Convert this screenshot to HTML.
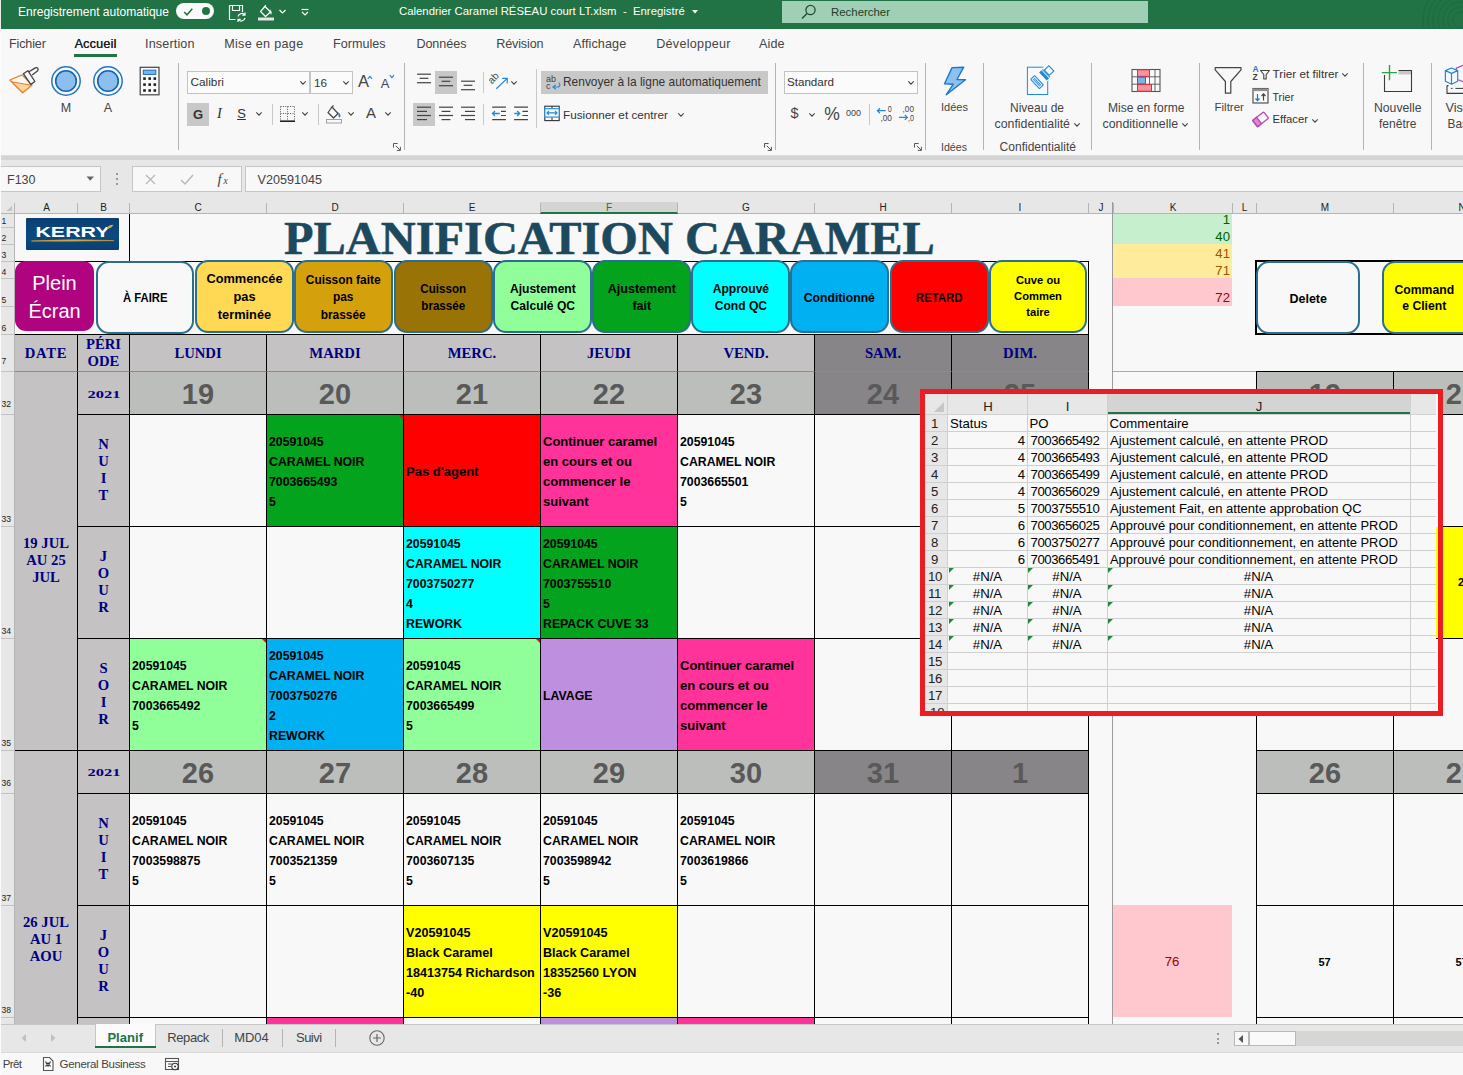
<!DOCTYPE html>
<html lang="fr"><head><meta charset="utf-8"><title>Calendrier Caramel RÉSEAU court LT.xlsm - Excel</title>
<style>
html,body{margin:0;padding:0;}
body{width:1463px;height:1075px;overflow:hidden;background:#f8f8f8;font-family:"Liberation Sans","DejaVu Sans",sans-serif;}
#app{position:relative;width:1463px;height:1075px;overflow:hidden;}
#app div,#app svg{position:absolute;box-sizing:border-box;}
.t{white-space:pre;}
.c{white-space:pre-line;display:flex;align-items:center;padding:2px 0 0 2px;font:bold 12.3px/20px "Liberation Sans","DejaVu Sans",sans-serif;color:#000;border-right:1px solid #000;border-bottom:1px solid #000;}
.btn{display:flex;align-items:center;justify-content:center;text-align:center;border:2px solid #2a6f8f;border-radius:13px;padding-top:1px;font:bold 12.8px/17.6px "Liberation Sans","DejaVu Sans",sans-serif;color:#000;white-space:pre-line;}
.hd{display:flex;align-items:center;justify-content:center;text-align:center;font:bold 14.67px/17px "Liberation Serif","DejaVu Serif",serif;color:#000080;white-space:pre-line;}
.dn{display:flex;align-items:center;justify-content:center;font:bold 29px/34px "Liberation Sans","DejaVu Sans",sans-serif;color:#595959;}
</style></head><body><div id="app">
<div style="left:0px;top:0px;width:1463px;height:29px;background:#217346;"></div>
<div style="left:0px;top:0px;width:1px;height:29px;background:#e8efe9;"></div>
<div class="t" style="left:18px;top:5.1px;font:normal normal 12.02px/14.42px 'Liberation Sans', 'DejaVu Sans', sans-serif;color:#fff;">Enregistrement automatique</div>
<div style="left:176px;top:3px;width:38px;height:16px;background:#fafafa;border-radius:8px;"></div>
<svg style="left:182.5px;top:6.5px;" width="11" height="10" viewBox="0 0 11 10"><path d="M1.2 5 L4 7.8 L9.3 1.8" fill="none" stroke="#217346" stroke-width="1.5"/></svg>
<div style="left:202px;top:7px;width:8.4px;height:8.4px;background:#217346;border-radius:5px;"></div>
<svg style="left:228px;top:4px;" width="19" height="19" viewBox="0 0 19 19"><path d="M1.5 1.5 H14.5 V8 M1.5 1.5 V15.5 H7.5 M4.5 1.5 V6.5 H11.5 V1.5" fill="none" stroke="#fff" stroke-width="1.2"/><path d="M10 12.5 a4 4 0 0 1 7 -1.5 M17 14 a4 4 0 0 1 -7 1.5 M17 8.5 V11.2 H14.3 M10 18 V15.3 H12.7" fill="none" stroke="#fff" stroke-width="1.2"/></svg>
<svg style="left:256px;top:2px;" width="20" height="20" viewBox="0 0 20 20"><path d="M9 4.5 L14.5 10 L9.5 14.5 L4.5 9.5 Z M7.5 6 L9.8 3.2" fill="none" stroke="#fff" stroke-width="1.2" stroke-linejoin="round"/><path d="M14.3 7.2 q2.2 3 1.2 5.3 q-1.8 0 -1.2 -5.3" fill="#fff"/><rect x="2" y="15.5" width="16" height="3" fill="#f0e2e2"/></svg>
<svg style="left:278px;top:8px;" width="9" height="7" viewBox="0 0 9 7"><path d="M1.5 2 L4.5 5 L7.5 2" fill="none" stroke="#fff" stroke-width="1.2"/></svg>
<svg style="left:299.5px;top:7px;" width="10" height="10" viewBox="0 0 10 10"><path d="M1.5 2.5 H8.5" stroke="#fff" stroke-width="1.2"/><path d="M2 5 L5 8 L8 5" fill="none" stroke="#fff" stroke-width="1.2"/></svg>
<div class="t" style="left:399px;top:5.0px;font:normal normal 11.37px/13.64px 'Liberation Sans', 'DejaVu Sans', sans-serif;color:#fff;">Calendrier Caramel RÉSEAU court LT.xlsm  -  Enregistré</div>
<svg style="left:691px;top:9px;" width="8" height="6" viewBox="0 0 8 6"><path d="M1 1 L4 4.4 L7 1 Z" fill="#fff"/></svg>
<div style="left:782px;top:1px;width:366px;height:22px;background:#9fd0b5;"></div>
<svg style="left:800px;top:3px;" width="18" height="18" viewBox="0 0 18 18"><circle cx="10.5" cy="7" r="4.6" fill="none" stroke="#1e4e32" stroke-width="1.3"/><path d="M7 10.5 L2 15.5" stroke="#1e4e32" stroke-width="1.4"/></svg>
<div class="t" style="left:831px;top:5.5px;font:normal normal 11.41px/13.69px 'Liberation Sans', 'DejaVu Sans', sans-serif;color:#1f3b2a;">Rechercher</div>
<svg style="left:1383px;top:0px;" width="80" height="29" viewBox="0 0 80 29"><g fill="none" stroke="#1e6a40" stroke-width="1.6" opacity="0.75"><circle cx="78" cy="20" r="8"/><circle cx="78" cy="20" r="13"/><circle cx="78" cy="20" r="18"/><circle cx="78" cy="20" r="23"/><circle cx="78" cy="20" r="28"/><circle cx="78" cy="20" r="33"/><circle cx="78" cy="20" r="38"/></g></svg>
<div style="left:0px;top:29px;width:1463px;height:29px;background:#f8f8f8;"></div>
<div class="t" style="left:9px;top:37.4px;font:normal normal 12.6px/15.12px 'Liberation Sans', 'DejaVu Sans', sans-serif;color:#444;letter-spacing:-0.158px;">Fichier</div>
<div class="t" style="left:145px;top:37.4px;font:normal normal 12.6px/15.12px 'Liberation Sans', 'DejaVu Sans', sans-serif;color:#444;letter-spacing:0.153px;">Insertion</div>
<div class="t" style="left:224.2px;top:37.4px;font:normal normal 12.6px/15.12px 'Liberation Sans', 'DejaVu Sans', sans-serif;color:#444;letter-spacing:0.304px;">Mise en page</div>
<div class="t" style="left:333px;top:37.4px;font:normal normal 12.6px/15.12px 'Liberation Sans', 'DejaVu Sans', sans-serif;color:#444;letter-spacing:-0.001px;">Formules</div>
<div class="t" style="left:416.4px;top:37.4px;font:normal normal 12.6px/15.12px 'Liberation Sans', 'DejaVu Sans', sans-serif;color:#444;letter-spacing:-0.062px;">Données</div>
<div class="t" style="left:496.2px;top:37.4px;font:normal normal 12.6px/15.12px 'Liberation Sans', 'DejaVu Sans', sans-serif;color:#444;letter-spacing:-0.128px;">Révision</div>
<div class="t" style="left:573px;top:37.4px;font:normal normal 12.6px/15.12px 'Liberation Sans', 'DejaVu Sans', sans-serif;color:#444;letter-spacing:0.121px;">Affichage</div>
<div class="t" style="left:656.2px;top:37.4px;font:normal normal 12.6px/15.12px 'Liberation Sans', 'DejaVu Sans', sans-serif;color:#444;letter-spacing:0.287px;">Développeur</div>
<div class="t" style="left:759px;top:37.4px;font:normal normal 12.6px/15.12px 'Liberation Sans', 'DejaVu Sans', sans-serif;color:#444;letter-spacing:0.120px;">Aide</div>
<div class="t" style="left:74.4px;top:37.4px;font:normal normal 12.6px/15.12px 'Liberation Sans', 'DejaVu Sans', sans-serif;color:#222;text-shadow:0.25px 0 0 #222;letter-spacing:0.212px;">Accueil</div>
<div style="left:74px;top:54px;width:43px;height:3px;background:#217346;"></div>
<div style="left:0px;top:58px;width:1463px;height:97px;background:#f8f8f8;"></div>
<div style="left:0px;top:155px;width:1463px;height:5px;background:#d4d4d4;"></div>
<div style="left:0px;top:155px;width:1463px;height:1px;background:#dedede;"></div>
<div style="left:178px;top:63px;width:1px;height:87px;background:#b4b4b4;"></div>
<div style="left:404px;top:63px;width:1px;height:87px;background:#b4b4b4;"></div>
<div style="left:775px;top:63px;width:1px;height:87px;background:#b4b4b4;"></div>
<div style="left:925px;top:63px;width:1px;height:87px;background:#b4b4b4;"></div>
<div style="left:983px;top:63px;width:1px;height:87px;background:#b4b4b4;"></div>
<div style="left:1091px;top:63px;width:1px;height:87px;background:#b4b4b4;"></div>
<div style="left:1199px;top:63px;width:1px;height:87px;background:#b4b4b4;"></div>
<div style="left:1363px;top:63px;width:1px;height:87px;background:#b4b4b4;"></div>
<div style="left:1431px;top:63px;width:1px;height:87px;background:#b4b4b4;"></div>
<svg style="left:8px;top:64px;" width="34" height="34" viewBox="0 0 34 34"><path d="M1.9 16 L14.1 10.9 L24 21 L14.7 28.8 Z" fill="#f8f8f8" stroke="#e8822a" stroke-width="1.3" stroke-linejoin="round"/><path d="M3.6 17.7 L23.4 21.3 L14.7 28.6 Z" fill="#fbd59a" stroke="#e8822a" stroke-width="1.1" stroke-linejoin="round"/><path d="M20.6 8 L27.3 3.9 q1.7 -0.8 2.6 0.6 q0.8 1.5 -0.5 2.5 L24.2 11" fill="#f8f8f8" stroke="#444" stroke-width="1.3" stroke-linejoin="round"/><path d="M15.3 9.7 L19.9 6.7 L26.9 17.5 L22.8 20.4 Z" fill="#f8f8f8" stroke="#444" stroke-width="1.3" stroke-linejoin="round"/></svg>
<svg style="left:50px;top:65px;" width="32" height="32" viewBox="0 0 32 32"><circle cx="16" cy="16" r="14.2" fill="#f8f8f8" stroke="#1e78c8" stroke-width="1.5"/><circle cx="16" cy="16" r="10.3" fill="#8cbfee" stroke="#1464b4" stroke-width="1.6"/></svg>
<div class="t" style="left:-234px;width:600px;text-align:center;top:100.8px;font:normal normal 12.5px/15.0px 'Liberation Sans', 'DejaVu Sans', sans-serif;color:#444;">M</div>
<svg style="left:92px;top:65px;" width="32" height="32" viewBox="0 0 32 32"><circle cx="16" cy="16" r="14.2" fill="#f8f8f8" stroke="#1e78c8" stroke-width="1.5"/><circle cx="16" cy="16" r="10.3" fill="#8cbfee" stroke="#1464b4" stroke-width="1.6"/></svg>
<div class="t" style="left:-192px;width:600px;text-align:center;top:100.8px;font:normal normal 12.5px/15.0px 'Liberation Sans', 'DejaVu Sans', sans-serif;color:#444;">A</div>
<svg style="left:139px;top:66px;" width="22" height="30" viewBox="0 0 22 30"><rect x="1.2" y="1.3" width="18.8" height="27.5" fill="#fafafa" stroke="#444" stroke-width="1.2"/><rect x="4.3" y="4.2" width="12.5" height="4.2" fill="#7ab5ea" stroke="#1e6cc0" stroke-width="1"/><rect x="4.2" y="11.299999999999999" width="2.6" height="2.6" fill="#222"/><rect x="4.2" y="17.3" width="2.6" height="2.6" fill="#222"/><rect x="4.2" y="23.2" width="2.6" height="2.6" fill="#222"/><rect x="9.399999999999999" y="11.299999999999999" width="2.6" height="2.6" fill="#222"/><rect x="9.399999999999999" y="17.3" width="2.6" height="2.6" fill="#222"/><rect x="9.399999999999999" y="23.2" width="2.6" height="2.6" fill="#222"/><rect x="14.5" y="11.299999999999999" width="2.6" height="2.6" fill="#222"/><rect x="14.5" y="17.3" width="2.6" height="2.6" fill="#222"/><rect x="14.5" y="23.2" width="2.6" height="2.6" fill="#222"/></svg>
<div style="left:187px;top:71px;width:123px;height:23px;background:#fbfbfb;border:1px solid #c3c3c3;"></div>
<div style="left:310px;top:71px;width:43px;height:23px;background:#fbfbfb;border:1px solid #c3c3c3;border-left:1px solid #c3c3c3;"></div>
<div class="t" style="left:190.5px;top:75.4px;font:normal normal 11.82px/14.18px 'Liberation Sans', 'DejaVu Sans', sans-serif;color:#333;">Calibri</div>
<div class="t" style="left:314px;top:75.5px;font:normal normal 11.69px/14.03px 'Liberation Sans', 'DejaVu Sans', sans-serif;color:#333;">16</div>
<svg style="left:299px;top:80px;" width="8" height="6" viewBox="0 0 8 6"><path d="M1.3 1.4 L4 4.1 L6.7 1.4" fill="none" stroke="#444" stroke-width="1.1"/></svg>
<svg style="left:342px;top:80px;" width="8" height="6" viewBox="0 0 8 6"><path d="M1.3 1.4 L4 4.1 L6.7 1.4" fill="none" stroke="#444" stroke-width="1.1"/></svg>
<div class="t" style="left:63.5px;width:600px;text-align:center;top:72.1px;font:normal normal 16.5px/19.8px 'Liberation Sans', 'DejaVu Sans', sans-serif;color:#444;">A</div>
<svg style="left:367px;top:74.5px;" width="6" height="5" viewBox="0 0 6 5"><path d="M0.8 3.8 L2.9 1.4 L5 3.8" fill="none" stroke="#2a7bd0" stroke-width="1.1"/></svg>
<div class="t" style="left:85px;width:600px;text-align:center;top:75.7px;font:normal normal 13px/15.6px 'Liberation Sans', 'DejaVu Sans', sans-serif;color:#444;">A</div>
<svg style="left:388.5px;top:74px;" width="6" height="5" viewBox="0 0 6 5"><path d="M0.8 1.2 L2.9 3.6 L5 1.2" fill="none" stroke="#2a7bd0" stroke-width="1.1"/></svg>
<div style="left:187px;top:103px;width:22px;height:23px;background:#c8c8c8;"></div>
<div class="t" style="left:-102px;width:600px;text-align:center;top:106.7px;font:normal bold 13px/15.6px 'Liberation Sans', 'DejaVu Sans', sans-serif;color:#333;">G</div>
<div class="t" style="left:-80.5px;width:600px;text-align:center;top:105.3px;font:italic normal 14.5px/17.4px 'Liberation Serif', 'DejaVu Serif', serif;color:#333;">I</div>
<div class="t" style="left:-58.5px;width:600px;text-align:center;top:105.7px;font:normal normal 13px/15.6px 'Liberation Sans', 'DejaVu Sans', sans-serif;color:#333;text-decoration:underline;">S</div>
<svg style="left:255px;top:111px;" width="8" height="6" viewBox="0 0 8 6"><path d="M1.3 1.4 L4 4.1 L6.7 1.4" fill="none" stroke="#444" stroke-width="1.1"/></svg>
<div style="left:272px;top:104px;width:1px;height:21px;background:#c8c8c8;"></div>
<svg style="left:279px;top:105px;" width="17" height="18" viewBox="0 0 17 18"><path d="M1.5 1.5 H15.5 M1.5 1.5 V15 M15.5 1.5 V15 M8.5 1.5 V15 M1.5 8.5 H15.5" fill="none" stroke="#555" stroke-width="1" stroke-dasharray="1 1.4"/><path d="M1 16.2 H16" stroke="#222" stroke-width="1.6"/></svg>
<svg style="left:301px;top:111px;" width="8" height="6" viewBox="0 0 8 6"><path d="M1.3 1.4 L4 4.1 L6.7 1.4" fill="none" stroke="#444" stroke-width="1.1"/></svg>
<div style="left:318px;top:104px;width:1px;height:21px;background:#c8c8c8;"></div>
<svg style="left:325px;top:104px;" width="19" height="20" viewBox="0 0 19 20"><path d="M7 3 L13 9.5 L8.5 14 L3 8.5 Z M6 4 L8.5 1.5" fill="none" stroke="#444" stroke-width="1.2" stroke-linejoin="round"/><path d="M13.5 8 q3 3.5 1.4 5.4 q-2 .5 -1.4 -5.4" fill="#2a7bd0"/><rect x="1.5" y="15.5" width="15" height="3.5" fill="#f8f8f8" stroke="#999" stroke-width="0.9"/></svg>
<svg style="left:347px;top:111px;" width="8" height="6" viewBox="0 0 8 6"><path d="M1.3 1.4 L4 4.1 L6.7 1.4" fill="none" stroke="#444" stroke-width="1.1"/></svg>
<div class="t" style="left:71px;width:600px;text-align:center;top:103.5px;font:normal normal 15px/18.0px 'Liberation Sans', 'DejaVu Sans', sans-serif;color:#444;">A</div>
<svg style="left:384px;top:111px;" width="8" height="6" viewBox="0 0 8 6"><path d="M1.3 1.4 L4 4.1 L6.7 1.4" fill="none" stroke="#444" stroke-width="1.1"/></svg>
<svg style="left:393px;top:143px;" width="9" height="9" viewBox="0 0 9 9"><path d="M0.5 4.6 V0.5 H4.6 M2.8 2.8 L7.2 7.2 M3.8 7.4 H7.4 V3.8" fill="none" stroke="#555" stroke-width="1"/></svg>
<svg style="left:764px;top:143px;" width="9" height="9" viewBox="0 0 9 9"><path d="M0.5 4.6 V0.5 H4.6 M2.8 2.8 L7.2 7.2 M3.8 7.4 H7.4 V3.8" fill="none" stroke="#555" stroke-width="1"/></svg>
<svg style="left:914px;top:143px;" width="9" height="9" viewBox="0 0 9 9"><path d="M0.5 4.6 V0.5 H4.6 M2.8 2.8 L7.2 7.2 M3.8 7.4 H7.4 V3.8" fill="none" stroke="#555" stroke-width="1"/></svg>
<div style="left:435px;top:71px;width:22px;height:23px;background:#c8c8c8;"></div>
<div style="left:413px;top:103px;width:22px;height:23px;background:#c8c8c8;"></div>
<svg style="left:415px;top:73px;" width="18" height="18" viewBox="0 0 18 18"><rect x="2" y="0.6" width="14" height="1.2" fill="#444"/><rect x="4.6" y="4.7" width="8.8" height="1.2" fill="#444"/><rect x="2" y="9.1" width="14" height="1.2" fill="#444"/></svg>
<svg style="left:437px;top:73px;" width="18" height="18" viewBox="0 0 18 18"><rect x="2" y="3.6" width="14" height="1.2" fill="#444"/><rect x="4.6" y="7.7" width="8.8" height="1.2" fill="#444"/><rect x="2" y="12.1" width="14" height="1.2" fill="#444"/></svg>
<svg style="left:459px;top:73px;" width="18" height="18" viewBox="0 0 18 18"><rect x="2" y="7.6" width="14" height="1.2" fill="#444"/><rect x="4.6" y="11.7" width="8.8" height="1.2" fill="#444"/><rect x="2" y="16.1" width="14" height="1.2" fill="#444"/></svg>
<svg style="left:415px;top:105px;" width="18" height="18" viewBox="0 0 18 18"><rect x="2" y="1.6" width="14" height="1.2" fill="#444"/><rect x="2" y="5.8" width="10" height="1.2" fill="#444"/><rect x="2" y="9.9" width="14" height="1.2" fill="#444"/><rect x="2" y="14" width="10" height="1.2" fill="#444"/></svg>
<svg style="left:437px;top:105px;" width="18" height="18" viewBox="0 0 18 18"><rect x="2" y="1.6" width="14" height="1.2" fill="#444"/><rect x="4.6" y="5.8" width="8.8" height="1.2" fill="#444"/><rect x="2" y="9.9" width="14" height="1.2" fill="#444"/><rect x="4.6" y="14" width="8.8" height="1.2" fill="#444"/></svg>
<svg style="left:459px;top:105px;" width="18" height="18" viewBox="0 0 18 18"><rect x="2" y="1.6" width="14" height="1.2" fill="#444"/><rect x="6" y="5.8" width="10" height="1.2" fill="#444"/><rect x="2" y="9.9" width="14" height="1.2" fill="#444"/><rect x="6" y="14" width="10" height="1.2" fill="#444"/></svg>
<div style="left:483px;top:72px;width:1px;height:21px;background:#c8c8c8;"></div>
<div style="left:483px;top:104px;width:1px;height:21px;background:#c8c8c8;"></div>
<svg style="left:489px;top:72px;" width="20" height="20" viewBox="0 0 20 20"><text x="3" y="12.5" font-size="10" font-family="Liberation Sans, sans-serif" fill="#444" transform="rotate(-48 3 12.5)">ab</text><path d="M7.3 16.7 L18 6.6 M13.2 6.4 L18.2 6.4 L18.2 11.4" fill="none" stroke="#1e8ad8" stroke-width="1.2"/></svg>
<svg style="left:510px;top:80px;" width="8" height="6" viewBox="0 0 8 6"><path d="M1.3 1.4 L4 4.1 L6.7 1.4" fill="none" stroke="#444" stroke-width="1.1"/></svg>
<svg style="left:490px;top:105px;" width="18" height="18" viewBox="0 0 18 18"><path d="M2.2 2.2 H15.9 M11 6.4 H15.9 M11 10.5 H15.9 M2.2 14.6 H15.9" stroke="#444" stroke-width="1.2"/><path d="M9.8 8.5 H2.6 M5 6 L2.5 8.5 L5 11" fill="none" stroke="#1e8ad8" stroke-width="1.3"/></svg>
<svg style="left:512px;top:105px;" width="18" height="18" viewBox="0 0 18 18"><path d="M2.1 2.2 H16 M10.4 6.4 H16 M10.4 10.5 H16 M2.1 14.6 H16" stroke="#444" stroke-width="1.2"/><path d="M2.3 8.5 H7.6 M5.2 6 L7.7 8.5 L5.2 11" fill="none" stroke="#1e8ad8" stroke-width="1.3"/></svg>
<div style="left:536px;top:69px;width:1px;height:59px;background:#c8c8c8;"></div>
<div style="left:541px;top:71px;width:227px;height:23px;background:#c8c8c8;"></div>
<svg style="left:545px;top:73px;" width="18" height="19" viewBox="0 0 18 19"><text x="1" y="8.8" font-size="9" font-family="Liberation Sans, sans-serif" fill="#444">ab</text><text x="1" y="15.8" font-size="9" font-family="Liberation Sans, sans-serif" fill="#444">c</text><path d="M13.6 9.6 q2.8 2.4 -0.2 4.4 H8.2 M10.8 11.6 L8 14 L10.8 16.4" fill="none" stroke="#1e8ad8" stroke-width="1.2"/></svg>
<div class="t" style="left:563px;top:75.3px;font:normal normal 11.95px/14.34px 'Liberation Sans', 'DejaVu Sans', sans-serif;color:#333;">Renvoyer à la ligne automatiquement</div>
<svg style="left:544px;top:105px;" width="17" height="17" viewBox="0 0 17 17"><rect x="0.8" y="1.2" width="14.4" height="14.4" fill="#f8f8f8" stroke="#333" stroke-width="1.1"/><path d="M8 1.2 V3.6 M8 12.2 V15.6" stroke="#333" stroke-width="1"/><rect x="0.8" y="3.7" width="14.4" height="8.4" fill="#f8f8f8" stroke="#1e8ad8" stroke-width="1.1"/><path d="M3 7.9 H13 M5 5.9 L3 7.9 L5 9.9 M11 5.9 L13 7.9 L11 9.9" fill="none" stroke="#1e8ad8" stroke-width="1.1"/></svg>
<div class="t" style="left:563px;top:107.5px;font:normal normal 11.73px/14.08px 'Liberation Sans', 'DejaVu Sans', sans-serif;color:#333;">Fusionner et centrer</div>
<svg style="left:677px;top:112px;" width="8" height="6" viewBox="0 0 8 6"><path d="M1.3 1.4 L4 4.1 L6.7 1.4" fill="none" stroke="#444" stroke-width="1.1"/></svg>
<div style="left:784px;top:71px;width:134px;height:23px;background:#fbfbfb;border:1px solid #c3c3c3;"></div>
<div class="t" style="left:787px;top:75.5px;font:normal normal 11.58px/13.9px 'Liberation Sans', 'DejaVu Sans', sans-serif;color:#333;">Standard</div>
<svg style="left:907px;top:80px;" width="8" height="6" viewBox="0 0 8 6"><path d="M1.3 1.4 L4 4.1 L6.7 1.4" fill="none" stroke="#444" stroke-width="1.1"/></svg>
<div class="t" style="left:494.5px;width:600px;text-align:center;top:105.3px;font:normal normal 14.5px/17.4px 'Liberation Sans', 'DejaVu Sans', sans-serif;color:#444;">$</div>
<svg style="left:808px;top:112px;" width="8" height="6" viewBox="0 0 8 6"><path d="M1.3 1.4 L4 4.1 L6.7 1.4" fill="none" stroke="#444" stroke-width="1.1"/></svg>
<div class="t" style="left:532px;width:600px;text-align:center;top:103.5px;font:normal normal 17.5px/21.0px 'Liberation Sans', 'DejaVu Sans', sans-serif;color:#444;">%</div>
<div class="t" style="left:553.5px;width:600px;text-align:center;top:107.6px;font:normal normal 9px/10.8px 'Liberation Sans', 'DejaVu Sans', sans-serif;color:#444;">000</div>
<div style="left:869px;top:104px;width:1px;height:21px;background:#c8c8c8;"></div>
<svg style="left:876px;top:105px;" width="18" height="18" viewBox="0 0 18 18"><text x="11.8" y="6.8" font-size="9.5" font-family="Liberation Sans, sans-serif" fill="#444" lengthAdjust="spacingAndGlyphs" textLength="4">0</text><text x="4.4" y="15.8" font-size="9.5" font-family="Liberation Sans, sans-serif" fill="#444" lengthAdjust="spacingAndGlyphs" textLength="11.6">,00</text><path d="M9.7 5.7 H1.5 M4 3.2 L1.4 5.7 L4 8.2" fill="none" stroke="#1e8ad8" stroke-width="1.2"/></svg>
<svg style="left:898px;top:105px;" width="18" height="18" viewBox="0 0 18 18"><text x="4.6" y="6.8" font-size="9.5" font-family="Liberation Sans, sans-serif" fill="#444" lengthAdjust="spacingAndGlyphs" textLength="11.4">,00</text><text x="10" y="15.8" font-size="9.5" font-family="Liberation Sans, sans-serif" fill="#444" lengthAdjust="spacingAndGlyphs" textLength="6">,0</text><path d="M1 12.4 H9.2 M6.8 9.9 L9.4 12.4 L6.8 14.9" fill="none" stroke="#1e8ad8" stroke-width="1.2"/></svg>
<svg style="left:943px;top:65px;" width="24" height="33" viewBox="0 0 24 33"><path d="M9.1 2.6 L20.7 2.2 L14 14.5 L22.5 14.8 L3.3 29.7 L10.3 19.2 L1.5 18.8 Z" fill="#8cc0f0" stroke="#1e78c8" stroke-width="1.4" stroke-linejoin="round"/></svg>
<div class="t" style="left:941px;top:101.4px;font:normal normal 11.04px/13.25px 'Liberation Sans', 'DejaVu Sans', sans-serif;color:#444;">Idées</div>
<div class="t" style="left:941px;top:140.6px;font:normal normal 10.63px/12.76px 'Liberation Sans', 'DejaVu Sans', sans-serif;color:#444;">Idées</div>
<svg style="left:1024px;top:63px;" width="34" height="36" viewBox="0 0 34 36"><rect x="3.4" y="4.2" width="20.3" height="27.3" fill="#f8f8f8" stroke="#1e8ad8" stroke-width="1"/><g transform="translate(13 19.1) rotate(-43.6)"><rect x="3" y="-6.4" width="19" height="12.8" fill="#f8f8f8"/><rect x="-2.7" y="-6.4" width="5.4" height="12.8" rx="0.8" fill="#f8f8f8" stroke="#1e8ad8" stroke-width="1.1"/><rect x="-0.9" y="-4.6" width="1.8" height="9.2" fill="#8cc0f0" stroke="#1e8ad8" stroke-width="0.8"/><rect x="8.2" y="-5.5" width="3.1" height="11" fill="#1e8ad8"/><rect x="12.2" y="-5.5" width="0.9" height="11" fill="#1e8ad8"/><rect x="13.6" y="-3.6" width="6.2" height="7.2" fill="#f8f8f8" stroke="#1e8ad8" stroke-width="1.1"/></g></svg>
<div class="t" style="left:1010px;top:100.8px;font:normal normal 11.99px/14.39px 'Liberation Sans', 'DejaVu Sans', sans-serif;color:#444;">Niveau de</div>
<div class="t" style="left:994.5px;top:116.6px;font:normal normal 12.35px/14.82px 'Liberation Sans', 'DejaVu Sans', sans-serif;color:#444;">confidentialité</div>
<svg style="left:1073px;top:122px;" width="8" height="6" viewBox="0 0 8 6"><path d="M1.3 1.4 L4 4.1 L6.7 1.4" fill="none" stroke="#444" stroke-width="1.1"/></svg>
<div class="t" style="left:999.5px;top:139.8px;font:normal normal 12.07px/14.48px 'Liberation Sans', 'DejaVu Sans', sans-serif;color:#444;">Confidentialité</div>
<svg style="left:1131px;top:68px;" width="31" height="26" viewBox="0 0 31 26"><rect x="1" y="1.5" width="28" height="22" fill="#fafafa" stroke="#555" stroke-width="1.1"/><path d="M1 8.8 H29 M1 16.2 H29 M6.5 1.5 V23.5 M18.5 1.5 V23.5 M24 1.5 V23.5" stroke="#555" stroke-width="0.9"/><rect x="6.5" y="1.8" width="12" height="6.6" fill="#f7929e" stroke="#d8323c" stroke-width="1"/><rect x="6.5" y="9.2" width="8" height="6.6" fill="#7ab5ea" stroke="#1e78c8" stroke-width="1"/><rect x="6.5" y="16.6" width="14" height="6.6" fill="#f7929e" stroke="#d8323c" stroke-width="1"/></svg>
<div class="t" style="left:1108px;top:100.8px;font:normal normal 12.07px/14.48px 'Liberation Sans', 'DejaVu Sans', sans-serif;color:#444;">Mise en forme</div>
<div class="t" style="left:1102.5px;top:116.6px;font:normal normal 12.35px/14.82px 'Liberation Sans', 'DejaVu Sans', sans-serif;color:#444;">conditionnelle</div>
<svg style="left:1180.5px;top:122px;" width="8" height="6" viewBox="0 0 8 6"><path d="M1.3 1.4 L4 4.1 L6.7 1.4" fill="none" stroke="#444" stroke-width="1.1"/></svg>
<svg style="left:1212px;top:65px;" width="34" height="32" viewBox="0 0 34 32"><path d="M3.2 2.6 H29 V4.8 L18.8 16.5 V28.2 H13.4 V16.5 L3.2 4.8 Z" fill="#f8f8f8" stroke="#444" stroke-width="1.2" stroke-linejoin="round"/></svg>
<div class="t" style="left:1214.5px;top:101.1px;font:normal normal 11.54px/13.85px 'Liberation Sans', 'DejaVu Sans', sans-serif;color:#444;">Filtrer</div>
<svg style="left:1252px;top:64px;" width="19" height="19" viewBox="0 0 19 19"><text x="0.5" y="8" font-size="8.5" font-weight="bold" font-family="Liberation Sans, sans-serif" fill="#1e78c8">A</text><text x="0.5" y="16.3" font-size="8.5" font-weight="bold" font-family="Liberation Sans, sans-serif" fill="#444">Z</text><path d="M8.5 6.5 H17.5 L14.2 10.5 V15 H11.8 V10.5 Z" fill="#f6f6f6" stroke="#444" stroke-width="1.1" stroke-linejoin="round"/></svg>
<div class="t" style="left:1272.5px;top:67.0px;font:normal normal 11.72px/14.06px 'Liberation Sans', 'DejaVu Sans', sans-serif;color:#333;">Trier et filtrer</div>
<svg style="left:1341px;top:71.5px;" width="8" height="6" viewBox="0 0 8 6"><path d="M1.3 1.4 L4 4.1 L6.7 1.4" fill="none" stroke="#444" stroke-width="1.1"/></svg>
<svg style="left:1252px;top:87px;" width="18" height="18" viewBox="0 0 18 18"><rect x="1" y="1.5" width="15" height="14.5" fill="#fafafa" stroke="#444" stroke-width="1.1"/><rect x="1" y="1.5" width="15" height="2.6" fill="#909090"/><path d="M5.5 7 V13.5 M3.5 11.5 L5.5 13.7 L7.5 11.5" fill="none" stroke="#1e78c8" stroke-width="1.2"/><path d="M11.5 13.5 V7 M9.5 9 L11.5 6.8 L13.5 9" fill="none" stroke="#444" stroke-width="1.2"/></svg>
<div class="t" style="left:1272.5px;top:90.6px;font:normal normal 10.65px/12.78px 'Liberation Sans', 'DejaVu Sans', sans-serif;color:#333;">Trier</div>
<svg style="left:1252px;top:110px;" width="18" height="18" viewBox="0 0 18 18"><g transform="rotate(-38 9 9)"><rect x="1.5" y="5" width="14" height="8" rx="1" fill="#f8f8f8" stroke="#b846b4" stroke-width="1.3"/><rect x="1.5" y="5" width="5" height="8" fill="#d68ad2" stroke="#b846b4" stroke-width="1.3"/></g></svg>
<div class="t" style="left:1272.5px;top:113.2px;font:normal normal 11.27px/13.52px 'Liberation Sans', 'DejaVu Sans', sans-serif;color:#333;">Effacer</div>
<svg style="left:1311px;top:117.5px;" width="8" height="6" viewBox="0 0 8 6"><path d="M1.3 1.4 L4 4.1 L6.7 1.4" fill="none" stroke="#444" stroke-width="1.1"/></svg>
<svg style="left:1380px;top:64px;" width="34" height="30" viewBox="0 0 34 30"><rect x="18.5" y="7" width="13" height="3.5" fill="#c8c8c8"/><path d="M4.5 11 V27.5 H31.5 V6.5 H18.5" fill="none" stroke="#3a3a3a" stroke-width="1.1"/><path d="M9.5 1 V16.3 M1.9 8.6 H16.9" stroke="#2ea043" stroke-width="1.4"/></svg>
<div class="t" style="left:1374px;top:100.7px;font:normal normal 12.21px/14.65px 'Liberation Sans', 'DejaVu Sans', sans-serif;color:#444;">Nouvelle</div>
<div class="t" style="left:1379px;top:116.8px;font:normal normal 12.05px/14.46px 'Liberation Sans', 'DejaVu Sans', sans-serif;color:#444;">fenêtre</div>
<svg style="left:1444px;top:63px;" width="19" height="36" viewBox="0 0 19 36"><path d="M1.4 7.6 L7.5 5 L13.7 7.6 V18.2 L7.5 21.3 L1.4 18.2 Z M1.4 7.6 L7.5 10.4 L13.7 7.6 M7.5 10.4 V21.3" fill="#f8f8f8" stroke="#1e8ad8" stroke-width="1.2" stroke-linejoin="round"/><path d="M19 2.4 L12.3 5.2 V7 M14.2 16.8 L19 18.6" fill="none" stroke="#b146c2" stroke-width="1.2"/><path d="M3 22.6 V30.4 H19 M3 22.6 H4.5" fill="none" stroke="#3a3a3a" stroke-width="1.1"/><path d="M6.9 25.4 H8.6 M11.4 25.4 H19" stroke="#3a3a3a" stroke-width="1"/></svg>
<div class="t" style="left:1445.5px;top:100.4px;font:normal normal 12.71px/15.25px 'Liberation Sans', 'DejaVu Sans', sans-serif;color:#444;">Visu</div>
<div class="t" style="left:1447.5px;top:116.9px;font:normal normal 11.9px/14.28px 'Liberation Sans', 'DejaVu Sans', sans-serif;color:#444;">Bas</div>
<div style="left:0px;top:160px;width:1463px;height:41px;background:#e6e7e6;"></div>
<div style="left:-1px;top:166px;width:102px;height:26px;background:#f8f8f8;border:1px solid #c6c6c6;"></div>
<div class="t" style="left:7px;top:172.8px;font:normal normal 12.5px/15.0px 'Liberation Sans', 'DejaVu Sans', sans-serif;color:#444;">F130</div>
<svg style="left:86px;top:176px;" width="9" height="6" viewBox="0 0 9 6"><path d="M0.5 0.5 H8 L4.2 4.8 Z" fill="#666"/></svg>
<div style="left:116px;top:173px;width:2px;height:2px;background:#999;"></div>
<div style="left:116px;top:178px;width:2px;height:2px;background:#999;"></div>
<div style="left:116px;top:183px;width:2px;height:2px;background:#999;"></div>
<div style="left:132px;top:166px;width:110px;height:26px;background:#f8f8f8;border:1px solid #c6c6c6;"></div>
<svg style="left:144px;top:173px;" width="13" height="13" viewBox="0 0 13 13"><path d="M2 2 L11 11 M11 2 L2 11" stroke="#b8b8b8" stroke-width="1.3"/></svg>
<svg style="left:179px;top:173px;" width="16" height="13" viewBox="0 0 16 13"><path d="M2 7 L6 11 L14 2" fill="none" stroke="#b8b8b8" stroke-width="1.5"/></svg>
<div class="t" style="left:-80.5px;width:600px;text-align:center;top:170.0px;font:italic normal 15px/18.0px 'Liberation Serif', 'DejaVu Serif', serif;color:#444;">f</div>
<div class="t" style="left:-74.5px;width:600px;text-align:center;top:175.8px;font:italic normal 9.5px/11.4px 'Liberation Serif', 'DejaVu Serif', serif;color:#444;">x</div>
<div style="left:245px;top:166px;width:1230px;height:26px;background:#f8f8f8;border:1px solid #c6c6c6;"></div>
<div class="t" style="left:257.5px;top:172.7px;font:normal normal 12.61px/15.13px 'Liberation Sans', 'DejaVu Sans', sans-serif;color:#444;">V20591045</div>
<div style="left:0px;top:201px;width:1463px;height:823px;background:#f8f8f8;"></div>
<div style="left:0px;top:201px;width:1463px;height:13px;background:#e6e7e6;"></div>
<div style="left:0px;top:213px;width:1463px;height:1px;background:#b5b5b5;"></div>
<div style="left:540px;top:202px;width:138px;height:11px;background:#d4d4d2;"></div>
<div style="left:540px;top:212px;width:138px;height:2px;background:#217346;"></div>
<div class="t" style="left:-253.5px;width:600px;text-align:center;top:201.8px;font:normal normal 10px/12.0px 'Liberation Sans', 'DejaVu Sans', sans-serif;color:#222;">A</div>
<div style="left:77px;top:203px;width:1px;height:10px;background:#b5b5b5;"></div>
<div class="t" style="left:-196.5px;width:600px;text-align:center;top:201.8px;font:normal normal 10px/12.0px 'Liberation Sans', 'DejaVu Sans', sans-serif;color:#222;">B</div>
<div style="left:129px;top:203px;width:1px;height:10px;background:#b5b5b5;"></div>
<div class="t" style="left:-102.0px;width:600px;text-align:center;top:201.8px;font:normal normal 10px/12.0px 'Liberation Sans', 'DejaVu Sans', sans-serif;color:#222;">C</div>
<div style="left:266px;top:203px;width:1px;height:10px;background:#b5b5b5;"></div>
<div class="t" style="left:35.0px;width:600px;text-align:center;top:201.8px;font:normal normal 10px/12.0px 'Liberation Sans', 'DejaVu Sans', sans-serif;color:#222;">D</div>
<div style="left:403px;top:203px;width:1px;height:10px;background:#b5b5b5;"></div>
<div class="t" style="left:172.0px;width:600px;text-align:center;top:201.8px;font:normal normal 10px/12.0px 'Liberation Sans', 'DejaVu Sans', sans-serif;color:#222;">E</div>
<div style="left:540px;top:203px;width:1px;height:10px;background:#b5b5b5;"></div>
<div class="t" style="left:309.0px;width:600px;text-align:center;top:201.8px;font:normal normal 10px/12.0px 'Liberation Sans', 'DejaVu Sans', sans-serif;color:#217346;">F</div>
<div style="left:677px;top:203px;width:1px;height:10px;background:#b5b5b5;"></div>
<div class="t" style="left:446.0px;width:600px;text-align:center;top:201.8px;font:normal normal 10px/12.0px 'Liberation Sans', 'DejaVu Sans', sans-serif;color:#222;">G</div>
<div style="left:814px;top:203px;width:1px;height:10px;background:#b5b5b5;"></div>
<div class="t" style="left:583.0px;width:600px;text-align:center;top:201.8px;font:normal normal 10px/12.0px 'Liberation Sans', 'DejaVu Sans', sans-serif;color:#222;">H</div>
<div style="left:951px;top:203px;width:1px;height:10px;background:#b5b5b5;"></div>
<div class="t" style="left:720.0px;width:600px;text-align:center;top:201.8px;font:normal normal 10px/12.0px 'Liberation Sans', 'DejaVu Sans', sans-serif;color:#222;">I</div>
<div style="left:1088px;top:203px;width:1px;height:10px;background:#b5b5b5;"></div>
<div class="t" style="left:801.0px;width:600px;text-align:center;top:201.8px;font:normal normal 10px/12.0px 'Liberation Sans', 'DejaVu Sans', sans-serif;color:#222;">J</div>
<div style="left:1113px;top:203px;width:1px;height:10px;background:#b5b5b5;"></div>
<div class="t" style="left:873.0px;width:600px;text-align:center;top:201.8px;font:normal normal 10px/12.0px 'Liberation Sans', 'DejaVu Sans', sans-serif;color:#222;">K</div>
<div style="left:1232px;top:203px;width:1px;height:10px;background:#b5b5b5;"></div>
<div class="t" style="left:944.5px;width:600px;text-align:center;top:201.8px;font:normal normal 10px/12.0px 'Liberation Sans', 'DejaVu Sans', sans-serif;color:#222;">L</div>
<div style="left:1256px;top:203px;width:1px;height:10px;background:#b5b5b5;"></div>
<div class="t" style="left:1025.0px;width:600px;text-align:center;top:201.8px;font:normal normal 10px/12.0px 'Liberation Sans', 'DejaVu Sans', sans-serif;color:#222;">M</div>
<div style="left:1393px;top:203px;width:1px;height:10px;background:#b5b5b5;"></div>
<div class="t" style="left:1162.0px;width:600px;text-align:center;top:201.8px;font:normal normal 10px/12.0px 'Liberation Sans', 'DejaVu Sans', sans-serif;color:#222;">N</div>
<div style="left:1530px;top:203px;width:1px;height:10px;background:#b5b5b5;"></div>
<div style="left:14px;top:203px;width:1px;height:10px;background:#b5b5b5;"></div>
<svg style="left:6px;top:205px;" width="7" height="7" viewBox="0 0 7 7"><path d="M6 0.5 V6 H0.5 Z" fill="#c4c4c4"/></svg>
<div style="left:0px;top:214px;width:14px;height:810px;background:#e6e7e6;"></div>
<div style="left:14px;top:214px;width:1px;height:810px;background:#b5b5b5;"></div>
<div class="t" style="left:1.5px;top:215.5px;font:normal normal 8.6px/10.32px 'Liberation Sans', 'DejaVu Sans', sans-serif;color:#222;">1</div>
<div style="left:1px;top:227px;width:13px;height:1px;background:#c2c2c2;"></div>
<div class="t" style="left:1.5px;top:232.5px;font:normal normal 8.6px/10.32px 'Liberation Sans', 'DejaVu Sans', sans-serif;color:#222;">2</div>
<div style="left:1px;top:244px;width:13px;height:1px;background:#c2c2c2;"></div>
<div class="t" style="left:1.5px;top:249.5px;font:normal normal 8.6px/10.32px 'Liberation Sans', 'DejaVu Sans', sans-serif;color:#222;">3</div>
<div style="left:1px;top:261px;width:13px;height:1px;background:#c2c2c2;"></div>
<div class="t" style="left:1.5px;top:266.5px;font:normal normal 8.6px/10.32px 'Liberation Sans', 'DejaVu Sans', sans-serif;color:#222;">4</div>
<div style="left:1px;top:278px;width:13px;height:1px;background:#c2c2c2;"></div>
<div class="t" style="left:1.5px;top:294.5px;font:normal normal 8.6px/10.32px 'Liberation Sans', 'DejaVu Sans', sans-serif;color:#222;">5</div>
<div style="left:1px;top:306px;width:13px;height:1px;background:#c2c2c2;"></div>
<div class="t" style="left:1.5px;top:322.5px;font:normal normal 8.6px/10.32px 'Liberation Sans', 'DejaVu Sans', sans-serif;color:#222;">6</div>
<div style="left:1px;top:334px;width:13px;height:1px;background:#c2c2c2;"></div>
<div class="t" style="left:1.5px;top:356.2px;font:normal normal 8.6px/10.32px 'Liberation Sans', 'DejaVu Sans', sans-serif;color:#222;">7</div>
<div style="left:1px;top:371px;width:13px;height:1px;background:#c2c2c2;"></div>
<div class="t" style="left:1.5px;top:399.3px;font:normal normal 8.6px/10.32px 'Liberation Sans', 'DejaVu Sans', sans-serif;color:#222;">32</div>
<div style="left:1px;top:414px;width:13px;height:1px;background:#c2c2c2;"></div>
<div class="t" style="left:1.5px;top:513.5px;font:normal normal 8.6px/10.32px 'Liberation Sans', 'DejaVu Sans', sans-serif;color:#222;">33</div>
<div style="left:1px;top:526px;width:13px;height:1px;background:#c2c2c2;"></div>
<div class="t" style="left:1.5px;top:625.5px;font:normal normal 8.6px/10.32px 'Liberation Sans', 'DejaVu Sans', sans-serif;color:#222;">34</div>
<div style="left:1px;top:638px;width:13px;height:1px;background:#c2c2c2;"></div>
<div class="t" style="left:1.5px;top:737.5px;font:normal normal 8.6px/10.32px 'Liberation Sans', 'DejaVu Sans', sans-serif;color:#222;">35</div>
<div style="left:1px;top:750px;width:13px;height:1px;background:#c2c2c2;"></div>
<div class="t" style="left:1.5px;top:778.3px;font:normal normal 8.6px/10.32px 'Liberation Sans', 'DejaVu Sans', sans-serif;color:#222;">36</div>
<div style="left:1px;top:793px;width:13px;height:1px;background:#c2c2c2;"></div>
<div class="t" style="left:1.5px;top:893.4px;font:normal normal 8.6px/10.32px 'Liberation Sans', 'DejaVu Sans', sans-serif;color:#222;">37</div>
<div style="left:1px;top:905px;width:13px;height:1px;background:#c2c2c2;"></div>
<div class="t" style="left:1.5px;top:1005.4px;font:normal normal 8.6px/10.32px 'Liberation Sans', 'DejaVu Sans', sans-serif;color:#222;">38</div>
<div style="left:1px;top:1017px;width:13px;height:1px;background:#c2c2c2;"></div>
<div style="left:129px;top:214px;width:1px;height:48px;background:#000;"></div>
<div style="left:15px;top:261px;width:1074px;height:1px;background:#000;"></div>
<div style="left:26px;top:218px;width:93px;height:32px;background:#0b3f74;border-radius:1px;background:linear-gradient(#0b3f74,#0a4a80 55%,#0b3f74);"></div>
<div class="t" style="left:35.4px;top:219.5px;font:normal bold 21.42px/25.7px 'Liberation Sans', 'DejaVu Sans', sans-serif;color:#fff;transform:scaleY(0.66);">KERRY</div>
<svg style="left:30px;top:237px;" width="86" height="8" viewBox="0 0 86 8"><path d="M1.5 4 Q42 1.6 84 3.6 Q42 4.4 1.5 4 Z" fill="#e0ad45" stroke="#c89a3a" stroke-width="0.7"/></svg>
<svg style="left:106px;top:224px;" width="8" height="6" viewBox="0 0 8 6"><path d="M0.5 5 Q2 0.8 7.5 0.8 Q5.5 4.6 0.5 5 Z" fill="#e0ad45"/></svg>
<div class="t" style="left:284px;top:209.8px;font:normal bold 48.39px/58.07px 'Liberation Serif', 'DejaVu Serif', serif;color:#1c495e;transform:scaleY(0.965);-webkit-text-stroke:0.5px #1c495e;">PLANIFICATION CARAMEL</div>
<div style="left:1088px;top:262px;width:1px;height:73px;background:#000;"></div>
<div style="left:15px;top:334px;width:1074px;height:1px;background:#000;"></div>
<div style="left:15px;top:261px;width:79px;height:70px;background:#b0037f;border-radius:11px;"></div>
<div class="t" style="left:-245.5px;width:600px;text-align:center;top:271.0px;font:normal normal 20px/24.0px 'Liberation Sans', 'DejaVu Sans', sans-serif;color:#fff;">Plein</div>
<div class="t" style="left:-245.5px;width:600px;text-align:center;top:298.5px;font:normal normal 20px/24.0px 'Liberation Sans', 'DejaVu Sans', sans-serif;color:#fff;">Écran</div>
<div class="btn" style="left:96px;top:261px;width:98px;height:73px;background:#f8f8f8;font-size:12.8px;line-height:17px;padding-top:0;"><span style="display:block;transform:scaleX(0.883);">À FAIRE</span></div>
<div class="btn" style="left:195px;top:260px;width:99px;height:73px;background:#ffd953;font-size:12.8px;line-height:17.8px;"><span style="display:block;transform:scaleX(1.0);">Commencée
pas
terminée</span></div>
<div class="btn" style="left:294px;top:260px;width:99px;height:73px;background:#d4a10c;font-size:12.8px;line-height:17.6px;"><span style="display:block;transform:scaleX(0.93);">Cuisson faite
pas
brassée</span></div>
<div class="btn" style="left:394px;top:260px;width:99px;height:73px;background:#9a7307;font-size:12.8px;line-height:17px;"><span style="display:block;transform:scaleX(0.906);">Cuisson
brassée</span></div>
<div class="btn" style="left:493px;top:260px;width:99px;height:73px;background:#90ff9a;font-size:12.8px;line-height:17px;"><span style="display:block;transform:scaleX(0.945);">Ajustement
Calculé QC</span></div>
<div class="btn" style="left:592px;top:260px;width:99px;height:73px;background:#04a31e;font-size:12.8px;line-height:17px;"><span style="display:block;transform:scaleX(0.977);">Ajustement
fait</span></div>
<div class="btn" style="left:691px;top:260px;width:99px;height:73px;background:#00ffff;font-size:12.8px;line-height:17px;"><span style="display:block;transform:scaleX(0.945);">Approuvé
Cond QC</span></div>
<div class="btn" style="left:790px;top:260px;width:99px;height:73px;background:#00b0f0;font-size:12.8px;line-height:17px;"><span style="display:block;transform:scaleX(0.953);">Conditionné</span></div>
<div class="btn" style="left:890px;top:260px;width:99px;height:73px;background:#ff0000;font-size:12.8px;line-height:17px;"><span style="display:block;transform:scaleX(0.891);">RETARD</span></div>
<div class="btn" style="left:989px;top:260px;width:98px;height:73px;background:#ffff00;font-size:11.7px;line-height:16px;padding-top:0;padding-bottom:1px;"><span style="display:block;transform:scaleX(0.957);">Cuve ou
Commen
taire</span></div>
<div class="hd" style="left:15px;top:335px;width:63px;height:37px;background:#c4c2c3;border-right:1px solid #000;border-bottom:1px solid #8a8a8a;letter-spacing:0.7px;">DATE</div>
<div class="hd" style="left:78px;top:335px;width:52px;height:37px;background:#c4c2c3;border-right:1px solid #000;border-bottom:1px solid #8a8a8a;">PÉRI
ODE</div>
<div class="hd" style="left:130px;top:335px;width:137px;height:37px;background:#c4c2c3;border-right:1px solid #000;border-bottom:1px solid #8a8a8a;">LUNDI</div>
<div class="hd" style="left:267px;top:335px;width:137px;height:37px;background:#c4c2c3;border-right:1px solid #000;border-bottom:1px solid #8a8a8a;">MARDI</div>
<div class="hd" style="left:404px;top:335px;width:137px;height:37px;background:#c4c2c3;border-right:1px solid #000;border-bottom:1px solid #8a8a8a;">MERC.</div>
<div class="hd" style="left:541px;top:335px;width:137px;height:37px;background:#c4c2c3;border-right:1px solid #000;border-bottom:1px solid #8a8a8a;">JEUDI</div>
<div class="hd" style="left:678px;top:335px;width:137px;height:37px;background:#c4c2c3;border-right:1px solid #000;border-bottom:1px solid #8a8a8a;">VEND.</div>
<div class="hd" style="left:815px;top:335px;width:137px;height:37px;background:#878587;border-right:1px solid #000;border-bottom:1px solid #8a8a8a;">SAM.</div>
<div class="hd" style="left:952px;top:335px;width:137px;height:37px;background:#878587;border-right:1px solid #000;border-bottom:1px solid #8a8a8a;">DIM.</div>
<div class="hd" style="left:15px;top:372px;width:63px;height:379px;background:#c4c2c3;border-right:1px solid #000;border-bottom:1px solid #000;padding-bottom:2px;">19 JUL
AU 25
JUL</div>
<div class="hd" style="left:78px;top:372px;width:52px;height:43px;background:#c4c2c3;border-right:1px solid #000;border-bottom:1px solid #000;"></div>
<div class="dn" style="left:130px;top:372px;width:137px;height:43px;background:#bcbebc;border-right:1px solid #000;border-bottom:1px solid #000;padding-top:1px;">19</div>
<div class="dn" style="left:267px;top:372px;width:137px;height:43px;background:#bcbebc;border-right:1px solid #000;border-bottom:1px solid #000;padding-top:1px;">20</div>
<div class="dn" style="left:404px;top:372px;width:137px;height:43px;background:#bcbebc;border-right:1px solid #000;border-bottom:1px solid #000;padding-top:1px;">21</div>
<div class="dn" style="left:541px;top:372px;width:137px;height:43px;background:#bcbebc;border-right:1px solid #000;border-bottom:1px solid #000;padding-top:1px;">22</div>
<div class="dn" style="left:678px;top:372px;width:137px;height:43px;background:#bcbebc;border-right:1px solid #000;border-bottom:1px solid #000;padding-top:1px;">23</div>
<div class="dn" style="left:815px;top:372px;width:137px;height:43px;background:#878587;border-right:1px solid #000;border-bottom:1px solid #000;padding-top:1px;">24</div>
<div class="dn" style="left:952px;top:372px;width:137px;height:43px;background:#878587;border-right:1px solid #000;border-bottom:1px solid #000;padding-top:1px;">25</div>
<div class="hd" style="left:78px;top:415px;width:52px;height:112px;background:#c4c2c3;border-right:1px solid #000;border-bottom:1px solid #000;padding-bottom:1px;">N
U
I
T</div>
<div class="c" style="left:130px;top:415px;width:137px;height:112px;background:#f8f8f8;"></div>
<div class="c" style="left:267px;top:415px;width:137px;height:112px;background:#04a31e;">20591045
CARAMEL NOIR
7003665493
5</div>
<div class="c" style="left:404px;top:415px;width:137px;height:112px;background:#ff0000;font-size:13px;">Pas d'agent</div>
<div class="c" style="left:541px;top:415px;width:137px;height:112px;background:#ff3399;font-size:13px;">Continuer caramel
en cours et ou
commencer le
suivant</div>
<div class="c" style="left:678px;top:415px;width:137px;height:112px;background:#f8f8f8;">20591045
CARAMEL NOIR
7003665501
5</div>
<div class="c" style="left:815px;top:415px;width:137px;height:112px;background:#f8f8f8;"></div>
<div class="c" style="left:952px;top:415px;width:137px;height:112px;background:#f8f8f8;"></div>
<div class="hd" style="left:78px;top:527px;width:52px;height:112px;background:#c4c2c3;border-right:1px solid #000;border-bottom:1px solid #000;padding-bottom:1px;">J
O
U
R</div>
<div class="c" style="left:130px;top:527px;width:137px;height:112px;background:#f8f8f8;"></div>
<div class="c" style="left:267px;top:527px;width:137px;height:112px;background:#f8f8f8;"></div>
<div class="c" style="left:404px;top:527px;width:137px;height:112px;background:#00ffff;">20591045
CARAMEL NOIR
7003750277
4
REWORK</div>
<div class="c" style="left:541px;top:527px;width:137px;height:112px;background:#04a31e;">20591045
CARAMEL NOIR
7003755510
5
REPACK CUVE 33</div>
<div class="c" style="left:678px;top:527px;width:137px;height:112px;background:#f8f8f8;"></div>
<div class="c" style="left:815px;top:527px;width:137px;height:112px;background:#f8f8f8;"></div>
<div class="c" style="left:952px;top:527px;width:137px;height:112px;background:#f8f8f8;"></div>
<div class="hd" style="left:78px;top:639px;width:52px;height:112px;background:#c4c2c3;border-right:1px solid #000;border-bottom:1px solid #000;padding-bottom:1px;">S
O
I
R</div>
<div class="c" style="left:130px;top:639px;width:137px;height:112px;background:#90ff9a;">20591045
CARAMEL NOIR
7003665492
5</div>
<div class="c" style="left:267px;top:639px;width:137px;height:112px;background:#00b0f0;">20591045
CARAMEL NOIR
7003750276
2
REWORK</div>
<div class="c" style="left:404px;top:639px;width:137px;height:112px;background:#90ff9a;">20591045
CARAMEL NOIR
7003665499
5</div>
<div class="c" style="left:541px;top:639px;width:137px;height:112px;background:#bf8fdf;">LAVAGE</div>
<div class="c" style="left:678px;top:639px;width:137px;height:112px;background:#ff3399;font-size:13px;">Continuer caramel
en cours et ou
commencer le
suivant</div>
<div class="c" style="left:815px;top:639px;width:137px;height:112px;background:#f8f8f8;"></div>
<div class="c" style="left:952px;top:639px;width:137px;height:112px;background:#f8f8f8;"></div>
<div class="hd" style="left:15px;top:751px;width:63px;height:350px;background:#c4c2c3;border-right:1px solid #000;"></div>
<div class="hd" style="left:15px;top:905px;width:62px;height:66px;padding-top:2px;">26 JUL
AU 1
AOU</div>
<div class="hd" style="left:78px;top:751px;width:52px;height:43px;background:#c4c2c3;border-right:1px solid #000;border-bottom:1px solid #000;"></div>
<div class="dn" style="left:130px;top:751px;width:137px;height:43px;background:#bcbebc;border-right:1px solid #000;border-bottom:1px solid #000;padding-top:1px;">26</div>
<div class="dn" style="left:267px;top:751px;width:137px;height:43px;background:#bcbebc;border-right:1px solid #000;border-bottom:1px solid #000;padding-top:1px;">27</div>
<div class="dn" style="left:404px;top:751px;width:137px;height:43px;background:#bcbebc;border-right:1px solid #000;border-bottom:1px solid #000;padding-top:1px;">28</div>
<div class="dn" style="left:541px;top:751px;width:137px;height:43px;background:#bcbebc;border-right:1px solid #000;border-bottom:1px solid #000;padding-top:1px;">29</div>
<div class="dn" style="left:678px;top:751px;width:137px;height:43px;background:#bcbebc;border-right:1px solid #000;border-bottom:1px solid #000;padding-top:1px;">30</div>
<div class="dn" style="left:815px;top:751px;width:137px;height:43px;background:#878587;border-right:1px solid #000;border-bottom:1px solid #000;padding-top:1px;">31</div>
<div class="dn" style="left:952px;top:751px;width:137px;height:43px;background:#878587;border-right:1px solid #000;border-bottom:1px solid #000;padding-top:1px;">1</div>
<div class="hd" style="left:78px;top:794px;width:52px;height:112px;background:#c4c2c3;border-right:1px solid #000;border-bottom:1px solid #000;padding-bottom:1px;">N
U
I
T</div>
<div class="c" style="left:130px;top:794px;width:137px;height:112px;background:#f8f8f8;">20591045
CARAMEL NOIR
7003598875
5</div>
<div class="c" style="left:267px;top:794px;width:137px;height:112px;background:#f8f8f8;">20591045
CARAMEL NOIR
7003521359
5</div>
<div class="c" style="left:404px;top:794px;width:137px;height:112px;background:#f8f8f8;">20591045
CARAMEL NOIR
7003607135
5</div>
<div class="c" style="left:541px;top:794px;width:137px;height:112px;background:#f8f8f8;">20591045
CARAMEL NOIR
7003598942
5</div>
<div class="c" style="left:678px;top:794px;width:137px;height:112px;background:#f8f8f8;">20591045
CARAMEL NOIR
7003619866
5</div>
<div class="c" style="left:815px;top:794px;width:137px;height:112px;background:#f8f8f8;"></div>
<div class="c" style="left:952px;top:794px;width:137px;height:112px;background:#f8f8f8;"></div>
<div class="hd" style="left:78px;top:906px;width:52px;height:112px;background:#c4c2c3;border-right:1px solid #000;border-bottom:1px solid #000;padding-bottom:1px;">J
O
U
R</div>
<div class="c" style="left:130px;top:906px;width:137px;height:112px;background:#f8f8f8;"></div>
<div class="c" style="left:267px;top:906px;width:137px;height:112px;background:#f8f8f8;"></div>
<div class="c" style="left:404px;top:906px;width:137px;height:112px;background:#ffff00;font-size:12.6px;">V20591045
Black Caramel
18413754 Richardson
-40</div>
<div class="c" style="left:541px;top:906px;width:137px;height:112px;background:#ffff00;font-size:12.6px;">V20591045
Black Caramel
18352560 LYON
-36</div>
<div class="c" style="left:678px;top:906px;width:137px;height:112px;background:#f8f8f8;"></div>
<div class="c" style="left:815px;top:906px;width:137px;height:112px;background:#f8f8f8;"></div>
<div class="c" style="left:952px;top:906px;width:137px;height:112px;background:#f8f8f8;"></div>
<div class="hd" style="left:78px;top:1018px;width:52px;height:83px;background:#c4c2c3;border-right:1px solid #000;border-bottom:1px solid #000;padding-bottom:1px;"></div>
<div class="c" style="left:130px;top:1018px;width:137px;height:83px;background:#f8f8f8;"></div>
<div class="c" style="left:267px;top:1018px;width:137px;height:83px;background:#ff3399;"></div>
<div class="c" style="left:404px;top:1018px;width:137px;height:83px;background:#f8f8f8;"></div>
<div class="c" style="left:541px;top:1018px;width:137px;height:83px;background:#bf8fdf;"></div>
<div class="c" style="left:678px;top:1018px;width:137px;height:83px;background:#ff3399;"></div>
<div class="c" style="left:815px;top:1018px;width:137px;height:83px;background:#f8f8f8;"></div>
<div class="c" style="left:952px;top:1018px;width:137px;height:83px;background:#f8f8f8;"></div>
<div class="t" style="left:-196.5px;width:600px;text-align:center;top:387.9px;font:normal bold 11px/13.2px 'Liberation Serif', 'DejaVu Serif', serif;color:#000080;transform:scaleX(1.5);">2021</div>
<div class="t" style="left:-196.5px;width:600px;text-align:center;top:766.4px;font:normal bold 11px/13.2px 'Liberation Serif', 'DejaVu Serif', serif;color:#000080;transform:scaleX(1.5);">2021</div>
<svg style="left:399px;top:415px;" width="4" height="4" viewBox="0 0 4 4"><path d="M0 0 H4 V4 Z" fill="#ff0000"/></svg>
<svg style="left:262px;top:639px;" width="4" height="4" viewBox="0 0 4 4"><path d="M0 0 H4 V4 Z" fill="#ff0000"/></svg>
<svg style="left:536px;top:639px;" width="4" height="4" viewBox="0 0 4 4"><path d="M0 0 H4 V4 Z" fill="#ff0000"/></svg>
<div style="left:1112px;top:202px;width:1px;height:822px;background:#9c9c9c;"></div>
<div style="left:1113px;top:371px;width:143px;height:1px;background:#a8a8a8;"></div>
<div style="left:1113px;top:214px;width:119px;height:30px;background:#c6efce;"></div>
<div style="left:1113px;top:244px;width:119px;height:34px;background:#ffeb9c;"></div>
<div style="left:1113px;top:278px;width:119px;height:28px;background:#ffc7ce;"></div>
<div class="t" style="left:630px;width:600px;text-align:right;top:212.1px;font:normal normal 13.2px/15.84px 'Liberation Sans', 'DejaVu Sans', sans-serif;color:#006100;">1</div>
<div class="t" style="left:630px;width:600px;text-align:right;top:228.6px;font:normal normal 13.2px/15.84px 'Liberation Sans', 'DejaVu Sans', sans-serif;color:#006100;">40</div>
<div class="t" style="left:630px;width:600px;text-align:right;top:245.6px;font:normal normal 13.2px/15.84px 'Liberation Sans', 'DejaVu Sans', sans-serif;color:#9c5700;">41</div>
<div class="t" style="left:630px;width:600px;text-align:right;top:262.6px;font:normal normal 13.2px/15.84px 'Liberation Sans', 'DejaVu Sans', sans-serif;color:#9c5700;">71</div>
<div class="t" style="left:630px;width:600px;text-align:right;top:289.6px;font:normal normal 13.2px/15.84px 'Liberation Sans', 'DejaVu Sans', sans-serif;color:#9c0006;">72</div>
<div style="left:1113px;top:905px;width:119px;height:112px;background:#ffc7ce;"></div>
<div class="t" style="left:872px;width:600px;text-align:center;top:953.6px;font:normal normal 13.2px/15.84px 'Liberation Sans', 'DejaVu Sans', sans-serif;color:#9c0006;">76</div>
<div class="dn" style="left:1256px;top:371px;width:138px;height:44px;background:#bcbebc;border:1px solid #000;padding-top:1px;">19</div>
<div class="dn" style="left:1393px;top:371px;width:138px;height:44px;background:#bcbebc;border:1px solid #000;padding-top:1px;">20</div>
<div style="left:1256px;top:414px;width:138px;height:113px;background:#f8f8f8;border:1px solid #000;"></div>
<div style="left:1393px;top:414px;width:138px;height:113px;background:#f8f8f8;border:1px solid #000;"></div>
<div style="left:1256px;top:526px;width:138px;height:113px;background:#f8f8f8;border:1px solid #000;"></div>
<div style="left:1393px;top:526px;width:138px;height:113px;background:#ffff00;border:1px solid #000;"></div>
<div style="left:1256px;top:638px;width:138px;height:113px;background:#f8f8f8;border:1px solid #000;"></div>
<div style="left:1393px;top:638px;width:138px;height:113px;background:#f8f8f8;border:1px solid #000;"></div>
<div class="dn" style="left:1256px;top:750px;width:138px;height:44px;background:#bcbebc;border:1px solid #000;padding-top:1px;">26</div>
<div class="dn" style="left:1393px;top:750px;width:138px;height:44px;background:#bcbebc;border:1px solid #000;padding-top:1px;">27</div>
<div style="left:1256px;top:793px;width:138px;height:113px;background:#f8f8f8;border:1px solid #000;"></div>
<div style="left:1393px;top:793px;width:138px;height:113px;background:#f8f8f8;border:1px solid #000;"></div>
<div style="left:1256px;top:905px;width:138px;height:113px;background:#f8f8f8;border:1px solid #000;"></div>
<div style="left:1393px;top:905px;width:138px;height:113px;background:#f8f8f8;border:1px solid #000;"></div>
<div style="left:1256px;top:1017px;width:138px;height:84px;background:#f8f8f8;border:1px solid #000;"></div>
<div style="left:1393px;top:1017px;width:138px;height:84px;background:#f8f8f8;border:1px solid #000;"></div>
<div class="t" style="left:1024.5px;width:600px;text-align:center;top:955.9px;font:normal bold 11px/13.2px 'Liberation Sans', 'DejaVu Sans', sans-serif;color:#000;">57</div>
<div class="t" style="left:1161.5px;width:600px;text-align:center;top:955.9px;font:normal bold 11px/13.2px 'Liberation Sans', 'DejaVu Sans', sans-serif;color:#000;">57</div>
<div class="t" style="left:1164px;width:600px;text-align:center;top:576.4px;font:normal bold 11px/13.2px 'Liberation Sans', 'DejaVu Sans', sans-serif;color:#000;">20</div>
<div style="left:1255px;top:260px;width:220px;height:75px;border:2px solid #000;"></div>
<div class="btn" style="left:1256px;top:261px;width:104px;height:73px;background:#f8f8f8;font-size:12.8px;padding-top:2px;"><span style="display:block;transform:scaleX(0.977);">Delete</span></div>
<div class="btn" style="left:1382px;top:261px;width:103px;height:73px;background:#ffff00;padding-right:19px;font-size:12.8px;line-height:16.5px;"><span style="display:block;transform:scaleX(0.953);">Command
e Client</span></div>
<div style="left:920px;top:389px;width:523px;height:327px;background:#f8f8f8;border:5px solid #ea1d25;"></div>
<div style="left:925px;top:394px;width:511px;height:20px;background:#e6e7e6;"></div>
<div style="left:925px;top:414px;width:22px;height:297px;background:#e6e7e6;"></div>
<div style="left:1107px;top:394px;width:303px;height:20px;background:#d4d4d4;"></div>
<div style="left:1107px;top:412px;width:303px;height:2px;background:#217346;"></div>
<svg style="left:933px;top:401px;" width="12" height="12" viewBox="0 0 12 12"><path d="M11 1 V11 H1 Z" fill="#c6c6c6"/></svg>
<div style="left:947px;top:394px;width:1px;height:317px;background:#d0d0d0;"></div>
<div style="left:1027px;top:394px;width:1px;height:317px;background:#d0d0d0;"></div>
<div style="left:1107px;top:394px;width:1px;height:317px;background:#d0d0d0;"></div>
<div style="left:1410px;top:394px;width:1px;height:317px;background:#d0d0d0;"></div>
<div style="left:925px;top:414px;width:511px;height:1px;background:#d0d0d0;"></div>
<div style="left:925px;top:431px;width:511px;height:1px;background:#d0d0d0;"></div>
<div style="left:925px;top:448px;width:511px;height:1px;background:#d0d0d0;"></div>
<div style="left:925px;top:465px;width:511px;height:1px;background:#d0d0d0;"></div>
<div style="left:925px;top:482px;width:511px;height:1px;background:#d0d0d0;"></div>
<div style="left:925px;top:499px;width:511px;height:1px;background:#d0d0d0;"></div>
<div style="left:925px;top:516px;width:511px;height:1px;background:#d0d0d0;"></div>
<div style="left:925px;top:533px;width:511px;height:1px;background:#d0d0d0;"></div>
<div style="left:925px;top:550px;width:511px;height:1px;background:#d0d0d0;"></div>
<div style="left:925px;top:567px;width:511px;height:1px;background:#d0d0d0;"></div>
<div style="left:925px;top:584px;width:511px;height:1px;background:#d0d0d0;"></div>
<div style="left:925px;top:601px;width:511px;height:1px;background:#d0d0d0;"></div>
<div style="left:925px;top:618px;width:511px;height:1px;background:#d0d0d0;"></div>
<div style="left:925px;top:635px;width:511px;height:1px;background:#d0d0d0;"></div>
<div style="left:925px;top:652px;width:511px;height:1px;background:#d0d0d0;"></div>
<div style="left:925px;top:669px;width:511px;height:1px;background:#d0d0d0;"></div>
<div style="left:925px;top:686px;width:511px;height:1px;background:#d0d0d0;"></div>
<div style="left:925px;top:703px;width:511px;height:1px;background:#d0d0d0;"></div>
<div class="t" style="left:688.0px;width:600px;text-align:center;top:399.1px;font:normal normal 13.2px/15.84px 'Liberation Sans', 'DejaVu Sans', sans-serif;color:#222;">H</div>
<div class="t" style="left:767.5px;width:600px;text-align:center;top:399.1px;font:normal normal 13.2px/15.84px 'Liberation Sans', 'DejaVu Sans', sans-serif;color:#222;">I</div>
<div class="t" style="left:959.0px;width:600px;text-align:center;top:399.1px;font:normal normal 13.2px/15.84px 'Liberation Sans', 'DejaVu Sans', sans-serif;color:#222;">J</div>
<div class="t" style="left:931px;top:415.6px;font:normal normal 13.2px/15.84px 'Liberation Sans', 'DejaVu Sans', sans-serif;color:#222;letter-spacing:-0.3px;">1</div>
<div class="t" style="left:950px;top:415.6px;font:normal normal 13.2px/15.84px 'Liberation Sans', 'DejaVu Sans', sans-serif;color:#000;">Status</div>
<div class="t" style="left:1029.5px;top:415.6px;font:normal normal 13.2px/15.84px 'Liberation Sans', 'DejaVu Sans', sans-serif;color:#000;">PO</div>
<div class="t" style="left:1109.5px;top:415.6px;font:normal normal 13.2px/15.84px 'Liberation Sans', 'DejaVu Sans', sans-serif;color:#000;">Commentaire</div>
<div class="t" style="left:931px;top:432.6px;font:normal normal 13.2px/15.84px 'Liberation Sans', 'DejaVu Sans', sans-serif;color:#222;letter-spacing:-0.3px;">2</div>
<div class="t" style="left:425px;width:600px;text-align:right;top:432.6px;font:normal normal 13.2px/15.84px 'Liberation Sans', 'DejaVu Sans', sans-serif;color:#000;">4</div>
<div class="t" style="left:1030.5px;top:432.6px;font:normal normal 13.2px/15.84px 'Liberation Sans', 'DejaVu Sans', sans-serif;color:#000;letter-spacing:-0.45px;">7003665492</div>
<div class="t" style="left:1110px;top:432.6px;font:normal normal 13.16px/15.79px 'Liberation Sans', 'DejaVu Sans', sans-serif;color:#000;">Ajustement calculé, en attente PROD</div>
<div class="t" style="left:931px;top:449.6px;font:normal normal 13.2px/15.84px 'Liberation Sans', 'DejaVu Sans', sans-serif;color:#222;letter-spacing:-0.3px;">3</div>
<div class="t" style="left:425px;width:600px;text-align:right;top:449.6px;font:normal normal 13.2px/15.84px 'Liberation Sans', 'DejaVu Sans', sans-serif;color:#000;">4</div>
<div class="t" style="left:1030.5px;top:449.6px;font:normal normal 13.2px/15.84px 'Liberation Sans', 'DejaVu Sans', sans-serif;color:#000;letter-spacing:-0.45px;">7003665493</div>
<div class="t" style="left:1110px;top:449.6px;font:normal normal 13.16px/15.79px 'Liberation Sans', 'DejaVu Sans', sans-serif;color:#000;">Ajustement calculé, en attente PROD</div>
<div class="t" style="left:931px;top:466.6px;font:normal normal 13.2px/15.84px 'Liberation Sans', 'DejaVu Sans', sans-serif;color:#222;letter-spacing:-0.3px;">4</div>
<div class="t" style="left:425px;width:600px;text-align:right;top:466.6px;font:normal normal 13.2px/15.84px 'Liberation Sans', 'DejaVu Sans', sans-serif;color:#000;">4</div>
<div class="t" style="left:1030.5px;top:466.6px;font:normal normal 13.2px/15.84px 'Liberation Sans', 'DejaVu Sans', sans-serif;color:#000;letter-spacing:-0.45px;">7003665499</div>
<div class="t" style="left:1110px;top:466.6px;font:normal normal 13.16px/15.79px 'Liberation Sans', 'DejaVu Sans', sans-serif;color:#000;">Ajustement calculé, en attente PROD</div>
<div class="t" style="left:931px;top:483.6px;font:normal normal 13.2px/15.84px 'Liberation Sans', 'DejaVu Sans', sans-serif;color:#222;letter-spacing:-0.3px;">5</div>
<div class="t" style="left:425px;width:600px;text-align:right;top:483.6px;font:normal normal 13.2px/15.84px 'Liberation Sans', 'DejaVu Sans', sans-serif;color:#000;">4</div>
<div class="t" style="left:1030.5px;top:483.6px;font:normal normal 13.2px/15.84px 'Liberation Sans', 'DejaVu Sans', sans-serif;color:#000;letter-spacing:-0.45px;">7003656029</div>
<div class="t" style="left:1110px;top:483.6px;font:normal normal 13.16px/15.79px 'Liberation Sans', 'DejaVu Sans', sans-serif;color:#000;">Ajustement calculé, en attente PROD</div>
<div class="t" style="left:931px;top:500.6px;font:normal normal 13.2px/15.84px 'Liberation Sans', 'DejaVu Sans', sans-serif;color:#222;letter-spacing:-0.3px;">6</div>
<div class="t" style="left:425px;width:600px;text-align:right;top:500.6px;font:normal normal 13.2px/15.84px 'Liberation Sans', 'DejaVu Sans', sans-serif;color:#000;">5</div>
<div class="t" style="left:1030.5px;top:500.6px;font:normal normal 13.2px/15.84px 'Liberation Sans', 'DejaVu Sans', sans-serif;color:#000;letter-spacing:-0.45px;">7003755510</div>
<div class="t" style="left:1110px;top:500.7px;font:normal normal 13.06px/15.67px 'Liberation Sans', 'DejaVu Sans', sans-serif;color:#000;">Ajustement Fait, en attente approbation QC</div>
<div class="t" style="left:931px;top:517.6px;font:normal normal 13.2px/15.84px 'Liberation Sans', 'DejaVu Sans', sans-serif;color:#222;letter-spacing:-0.3px;">7</div>
<div class="t" style="left:425px;width:600px;text-align:right;top:517.6px;font:normal normal 13.2px/15.84px 'Liberation Sans', 'DejaVu Sans', sans-serif;color:#000;">6</div>
<div class="t" style="left:1030.5px;top:517.6px;font:normal normal 13.2px/15.84px 'Liberation Sans', 'DejaVu Sans', sans-serif;color:#000;letter-spacing:-0.45px;">7003656025</div>
<div class="t" style="left:1110px;top:517.8px;font:normal normal 12.89px/15.47px 'Liberation Sans', 'DejaVu Sans', sans-serif;color:#000;">Approuvé pour conditionnement, en attente PROD</div>
<div class="t" style="left:931px;top:534.6px;font:normal normal 13.2px/15.84px 'Liberation Sans', 'DejaVu Sans', sans-serif;color:#222;letter-spacing:-0.3px;">8</div>
<div class="t" style="left:425px;width:600px;text-align:right;top:534.6px;font:normal normal 13.2px/15.84px 'Liberation Sans', 'DejaVu Sans', sans-serif;color:#000;">6</div>
<div class="t" style="left:1030.5px;top:534.6px;font:normal normal 13.2px/15.84px 'Liberation Sans', 'DejaVu Sans', sans-serif;color:#000;letter-spacing:-0.45px;">7003750277</div>
<div class="t" style="left:1110px;top:534.8px;font:normal normal 12.89px/15.47px 'Liberation Sans', 'DejaVu Sans', sans-serif;color:#000;">Approuvé pour conditionnement, en attente PROD</div>
<div class="t" style="left:931px;top:551.6px;font:normal normal 13.2px/15.84px 'Liberation Sans', 'DejaVu Sans', sans-serif;color:#222;letter-spacing:-0.3px;">9</div>
<div class="t" style="left:425px;width:600px;text-align:right;top:551.6px;font:normal normal 13.2px/15.84px 'Liberation Sans', 'DejaVu Sans', sans-serif;color:#000;">6</div>
<div class="t" style="left:1030.5px;top:551.6px;font:normal normal 13.2px/15.84px 'Liberation Sans', 'DejaVu Sans', sans-serif;color:#000;letter-spacing:-0.45px;">7003665491</div>
<div class="t" style="left:1110px;top:551.8px;font:normal normal 12.89px/15.47px 'Liberation Sans', 'DejaVu Sans', sans-serif;color:#000;">Approuvé pour conditionnement, en attente PROD</div>
<div class="t" style="left:928px;top:568.6px;font:normal normal 13.2px/15.84px 'Liberation Sans', 'DejaVu Sans', sans-serif;color:#222;letter-spacing:-0.3px;">10</div>
<div class="t" style="left:687.5px;width:600px;text-align:center;top:568.6px;font:normal normal 13.2px/15.84px 'Liberation Sans', 'DejaVu Sans', sans-serif;color:#000;">#N/A</div>
<div class="t" style="left:767px;width:600px;text-align:center;top:568.6px;font:normal normal 13.2px/15.84px 'Liberation Sans', 'DejaVu Sans', sans-serif;color:#000;">#N/A</div>
<div class="t" style="left:958.5px;width:600px;text-align:center;top:568.6px;font:normal normal 13.2px/15.84px 'Liberation Sans', 'DejaVu Sans', sans-serif;color:#000;">#N/A</div>
<svg style="left:949px;top:568px;" width="5" height="5" viewBox="0 0 5 5"><path d="M0 0 H5 L0 5 Z" fill="#1e8a3c"/></svg>
<svg style="left:1028px;top:568px;" width="5" height="5" viewBox="0 0 5 5"><path d="M0 0 H5 L0 5 Z" fill="#1e8a3c"/></svg>
<svg style="left:1108px;top:568px;" width="5" height="5" viewBox="0 0 5 5"><path d="M0 0 H5 L0 5 Z" fill="#1e8a3c"/></svg>
<div class="t" style="left:928px;top:585.6px;font:normal normal 13.2px/15.84px 'Liberation Sans', 'DejaVu Sans', sans-serif;color:#222;letter-spacing:-0.3px;">11</div>
<div class="t" style="left:687.5px;width:600px;text-align:center;top:585.6px;font:normal normal 13.2px/15.84px 'Liberation Sans', 'DejaVu Sans', sans-serif;color:#000;">#N/A</div>
<div class="t" style="left:767px;width:600px;text-align:center;top:585.6px;font:normal normal 13.2px/15.84px 'Liberation Sans', 'DejaVu Sans', sans-serif;color:#000;">#N/A</div>
<div class="t" style="left:958.5px;width:600px;text-align:center;top:585.6px;font:normal normal 13.2px/15.84px 'Liberation Sans', 'DejaVu Sans', sans-serif;color:#000;">#N/A</div>
<svg style="left:949px;top:585px;" width="5" height="5" viewBox="0 0 5 5"><path d="M0 0 H5 L0 5 Z" fill="#1e8a3c"/></svg>
<svg style="left:1028px;top:585px;" width="5" height="5" viewBox="0 0 5 5"><path d="M0 0 H5 L0 5 Z" fill="#1e8a3c"/></svg>
<svg style="left:1108px;top:585px;" width="5" height="5" viewBox="0 0 5 5"><path d="M0 0 H5 L0 5 Z" fill="#1e8a3c"/></svg>
<div class="t" style="left:928px;top:602.6px;font:normal normal 13.2px/15.84px 'Liberation Sans', 'DejaVu Sans', sans-serif;color:#222;letter-spacing:-0.3px;">12</div>
<div class="t" style="left:687.5px;width:600px;text-align:center;top:602.6px;font:normal normal 13.2px/15.84px 'Liberation Sans', 'DejaVu Sans', sans-serif;color:#000;">#N/A</div>
<div class="t" style="left:767px;width:600px;text-align:center;top:602.6px;font:normal normal 13.2px/15.84px 'Liberation Sans', 'DejaVu Sans', sans-serif;color:#000;">#N/A</div>
<div class="t" style="left:958.5px;width:600px;text-align:center;top:602.6px;font:normal normal 13.2px/15.84px 'Liberation Sans', 'DejaVu Sans', sans-serif;color:#000;">#N/A</div>
<svg style="left:949px;top:602px;" width="5" height="5" viewBox="0 0 5 5"><path d="M0 0 H5 L0 5 Z" fill="#1e8a3c"/></svg>
<svg style="left:1028px;top:602px;" width="5" height="5" viewBox="0 0 5 5"><path d="M0 0 H5 L0 5 Z" fill="#1e8a3c"/></svg>
<svg style="left:1108px;top:602px;" width="5" height="5" viewBox="0 0 5 5"><path d="M0 0 H5 L0 5 Z" fill="#1e8a3c"/></svg>
<div class="t" style="left:928px;top:619.6px;font:normal normal 13.2px/15.84px 'Liberation Sans', 'DejaVu Sans', sans-serif;color:#222;letter-spacing:-0.3px;">13</div>
<div class="t" style="left:687.5px;width:600px;text-align:center;top:619.6px;font:normal normal 13.2px/15.84px 'Liberation Sans', 'DejaVu Sans', sans-serif;color:#000;">#N/A</div>
<div class="t" style="left:767px;width:600px;text-align:center;top:619.6px;font:normal normal 13.2px/15.84px 'Liberation Sans', 'DejaVu Sans', sans-serif;color:#000;">#N/A</div>
<div class="t" style="left:958.5px;width:600px;text-align:center;top:619.6px;font:normal normal 13.2px/15.84px 'Liberation Sans', 'DejaVu Sans', sans-serif;color:#000;">#N/A</div>
<svg style="left:949px;top:619px;" width="5" height="5" viewBox="0 0 5 5"><path d="M0 0 H5 L0 5 Z" fill="#1e8a3c"/></svg>
<svg style="left:1028px;top:619px;" width="5" height="5" viewBox="0 0 5 5"><path d="M0 0 H5 L0 5 Z" fill="#1e8a3c"/></svg>
<svg style="left:1108px;top:619px;" width="5" height="5" viewBox="0 0 5 5"><path d="M0 0 H5 L0 5 Z" fill="#1e8a3c"/></svg>
<div class="t" style="left:928px;top:636.6px;font:normal normal 13.2px/15.84px 'Liberation Sans', 'DejaVu Sans', sans-serif;color:#222;letter-spacing:-0.3px;">14</div>
<div class="t" style="left:687.5px;width:600px;text-align:center;top:636.6px;font:normal normal 13.2px/15.84px 'Liberation Sans', 'DejaVu Sans', sans-serif;color:#000;">#N/A</div>
<div class="t" style="left:767px;width:600px;text-align:center;top:636.6px;font:normal normal 13.2px/15.84px 'Liberation Sans', 'DejaVu Sans', sans-serif;color:#000;">#N/A</div>
<div class="t" style="left:958.5px;width:600px;text-align:center;top:636.6px;font:normal normal 13.2px/15.84px 'Liberation Sans', 'DejaVu Sans', sans-serif;color:#000;">#N/A</div>
<svg style="left:949px;top:636px;" width="5" height="5" viewBox="0 0 5 5"><path d="M0 0 H5 L0 5 Z" fill="#1e8a3c"/></svg>
<svg style="left:1028px;top:636px;" width="5" height="5" viewBox="0 0 5 5"><path d="M0 0 H5 L0 5 Z" fill="#1e8a3c"/></svg>
<svg style="left:1108px;top:636px;" width="5" height="5" viewBox="0 0 5 5"><path d="M0 0 H5 L0 5 Z" fill="#1e8a3c"/></svg>
<div class="t" style="left:928px;top:653.6px;font:normal normal 13.2px/15.84px 'Liberation Sans', 'DejaVu Sans', sans-serif;color:#222;letter-spacing:-0.3px;">15</div>
<div class="t" style="left:928px;top:670.6px;font:normal normal 13.2px/15.84px 'Liberation Sans', 'DejaVu Sans', sans-serif;color:#222;letter-spacing:-0.3px;">16</div>
<div class="t" style="left:928px;top:687.6px;font:normal normal 13.2px/15.84px 'Liberation Sans', 'DejaVu Sans', sans-serif;color:#222;letter-spacing:-0.3px;">17</div>
<div style="left:925px;top:703px;width:30px;height:8px;overflow:hidden;"><div class="t" style="left:5px;top:2px;font:13.2px/16px 'Liberation Sans',sans-serif;color:#222;">18</div></div>
<div style="left:1436px;top:527px;width:2px;height:111px;background:#ffff00;"></div>
<div style="left:1436px;top:638px;width:2px;height:1px;background:#000;"></div>
<div style="left:0px;top:1024px;width:1463px;height:28px;background:#e6e7e6;"></div>
<div style="left:0px;top:1024px;width:1463px;height:1px;background:#c6c6c6;"></div>
<svg style="left:20px;top:1033px;" width="8" height="10" viewBox="0 0 8 10"><path d="M6 1 L1.5 5 L6 9 Z" fill="#c0c0c0"/></svg>
<svg style="left:49px;top:1033px;" width="8" height="10" viewBox="0 0 8 10"><path d="M2 1 L6.5 5 L2 9 Z" fill="#c0c0c0"/></svg>
<div style="left:95px;top:1024px;width:61px;height:24px;background:#fbfbfb;border-left:1px solid #c6c6c6;border-right:1px solid #c6c6c6;"></div>
<div style="left:95px;top:1046px;width:61px;height:2px;background:#217346;"></div>
<div class="t" style="left:107.4px;top:1030.0px;font:normal bold 13px/15.6px 'Liberation Sans', 'DejaVu Sans', sans-serif;color:#217346;letter-spacing:0.034px;">Planif</div>
<div class="t" style="left:167.2px;top:1030.0px;font:normal normal 13px/15.6px 'Liberation Sans', 'DejaVu Sans', sans-serif;color:#444;letter-spacing:-0.380px;">Repack</div>
<div class="t" style="left:234.2px;top:1030.0px;font:normal normal 13px/15.6px 'Liberation Sans', 'DejaVu Sans', sans-serif;color:#444;letter-spacing:-0.069px;">MD04</div>
<div class="t" style="left:296px;top:1030.0px;font:normal normal 13px/15.6px 'Liberation Sans', 'DejaVu Sans', sans-serif;color:#444;letter-spacing:-0.515px;">Suivi</div>
<div style="left:222px;top:1029px;width:1px;height:18px;background:#b4b4b4;"></div>
<div style="left:282px;top:1029px;width:1px;height:18px;background:#b4b4b4;"></div>
<div style="left:335px;top:1029px;width:1px;height:18px;background:#b4b4b4;"></div>
<svg style="left:368px;top:1029px;" width="18" height="18" viewBox="0 0 18 18"><circle cx="9" cy="9" r="7.2" fill="none" stroke="#666" stroke-width="1.1"/><path d="M9 5 V13 M5 9 H13" stroke="#666" stroke-width="1.2"/></svg>
<div style="left:1217px;top:1033px;width:2px;height:2px;background:#999;"></div>
<div style="left:1217px;top:1037.5px;width:2px;height:2px;background:#999;"></div>
<div style="left:1217px;top:1042px;width:2px;height:2px;background:#999;"></div>
<div style="left:1234px;top:1031px;width:240px;height:15px;background:#d6d6d4;"></div>
<div style="left:1234px;top:1031px;width:15px;height:15px;background:#f8f8f8;border:1px solid #b8b8b8;"></div>
<svg style="left:1237px;top:1033.5px;" width="8" height="10" viewBox="0 0 8 10"><path d="M6 1 L1.5 5 L6 9 Z" fill="#555"/></svg>
<div style="left:1249px;top:1031px;width:47px;height:15px;background:#f9f9f9;border:1px solid #b8b8b8;"></div>
<div style="left:0px;top:1052px;width:1463px;height:23px;background:#f8f8f8;"></div>
<div style="left:0px;top:1052px;width:1463px;height:1px;background:#d9d9d9;"></div>
<div class="t" style="left:2.7px;top:1057.9px;font:normal normal 11.5px/13.8px 'Liberation Sans', 'DejaVu Sans', sans-serif;color:#444;letter-spacing:-0.623px;">Prêt</div>
<svg style="left:41px;top:1056px;" width="14" height="16" viewBox="0 0 14 16"><path d="M2.5 1.5 H8.5 L12 5 V14.5 H2.5 Z" fill="#fafafa" stroke="#555" stroke-width="1.1"/><path d="M4.5 5.5 L7 10 L9.5 5.5 M4.5 10.5 L7 7 L9.5 10.5" fill="none" stroke="#333" stroke-width="1.1"/></svg>
<div class="t" style="left:59.6px;top:1057.9px;font:normal normal 11.5px/13.8px 'Liberation Sans', 'DejaVu Sans', sans-serif;color:#444;letter-spacing:-0.311px;">General Business</div>
<svg style="left:164px;top:1056px;" width="17" height="16" viewBox="0 0 17 16"><rect x="1.5" y="2.5" width="13" height="11" fill="#fafafa" stroke="#555" stroke-width="1.1"/><path d="M1.5 5.5 H14.5 M4 8 H8 M4 10.5 H7" stroke="#555" stroke-width="1"/><circle cx="11" cy="10.5" r="3.2" fill="#fafafa" stroke="#333" stroke-width="1.1"/><circle cx="11" cy="10.5" r="1" fill="#333"/></svg>
<div style="left:0px;top:29px;width:1px;height:1046px;background:#fbfbfb;"></div>
</div></body></html>
